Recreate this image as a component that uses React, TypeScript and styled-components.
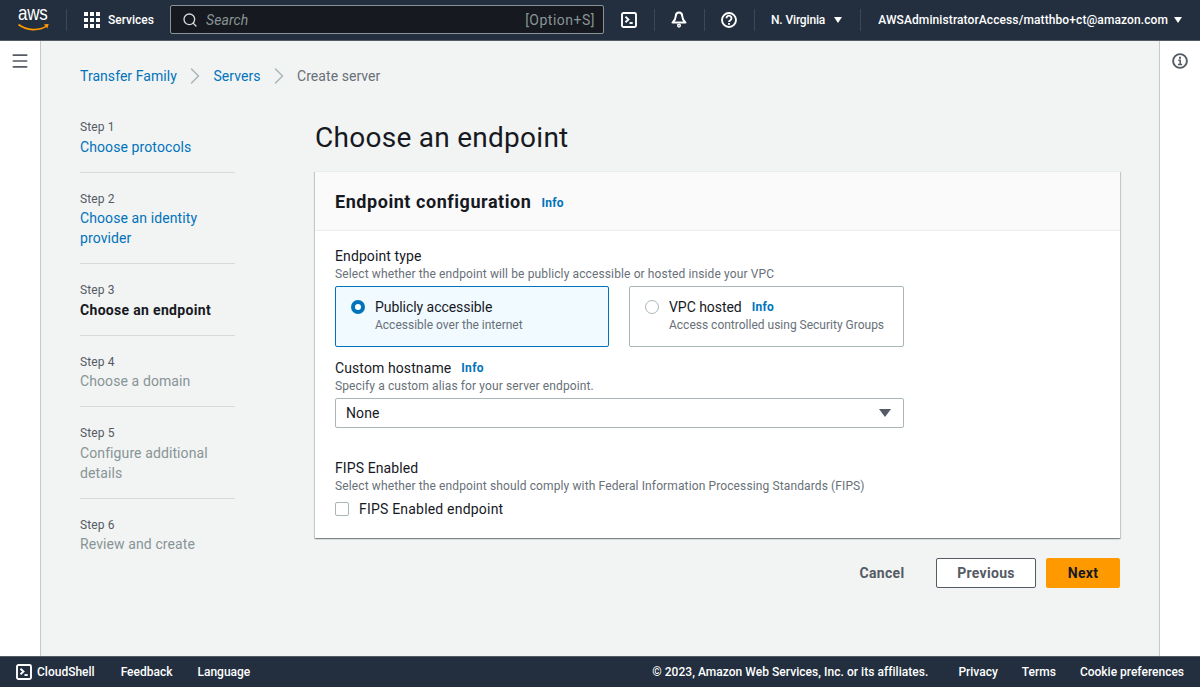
import styled, { createGlobalStyle } from "styled-components";
import { ChevronRight, Menu, Search } from "lucide-react";

const GlobalStyle = createGlobalStyle`
  html, body {
    margin: 0;
    padding: 0;
    background: #f2f3f3;
  }
  * {
    box-sizing: border-box;
  }
  body {
    font-family: Roboto, "Liberation Sans", sans-serif;
    font-size: 14px;
    line-height: 20px;
    letter-spacing: 0.1px;
    color: #16191f;
  }
`;

const Page = styled.div`
  display: grid;
  grid-template-rows: 41px 1fr 31px;
  width: 1200px;
  height: 687px;
  overflow: hidden;
`;

const TopBar = styled.header`
  display: flex;
  align-items: center;
  background: #232f3e;
  border-bottom: 1px solid #545b64;
  color: #fff;
  padding: 0 0 1px 18px;
`;

const Logo = styled.div`
  position: relative;
  width: 32px;
  height: 30px;
  font-family: "Liberation Sans", sans-serif;
  font-size: 17px;
  line-height: 20px;
  letter-spacing: -0.2px;
  color: #fff;

  svg {
    position: absolute;
    left: 0;
    top: 18px;
  }
`;

const LogoText = styled.span`
  display: block;
  transform: scale(1, 1.2);
  transform-origin: 0 15px;
`;

const BarDivider = styled.span<{ $gap: number }>`
  width: 1px;
  height: 22px;
  background: #414750;
  margin: 0 ${(p) => p.$gap}px;
`;

const ServicesButton = styled.div`
  display: flex;
  align-items: center;
  gap: 8px;
  font-size: 12px;
  font-weight: 500;
  letter-spacing: 0;
  width: 86px;
  margin-left: 1px;
`;

const SearchBox = styled.div`
  display: flex;
  align-items: center;
  width: 434px;
  height: 29px;
  background: #16191f;
  border: 1px solid #879596;
  border-radius: 2px;
  padding: 0 8px 0 11px;
  color: #d5dbdb;
  gap: 8px;
`;

const SearchHint = styled.span`
  flex: 1;
  font-style: italic;
  font-size: 14px;
  color: #879596;
`;

const ShortcutHint = styled.span`
  font-size: 14px;
  letter-spacing: 0.5px;
  color: #879596;
`;

const IconSlot = styled.div<{ $ml?: number }>`
  display: flex;
  align-items: center;
  justify-content: center;
  width: 20px;
  height: 20px;
  margin-left: ${(p) => p.$ml ?? 0}px;
`;

const BarLabel = styled.span<{ $ls?: number; $ml?: number }>`
  font-size: 12px;
  font-weight: 500;
  white-space: nowrap;
  margin-left: ${(p) => p.$ml ?? 0}px;
  letter-spacing: ${(p) => p.$ls ?? 0.1}px;
`;

const Caret = styled.span<{ $color?: string; $size?: number; $ml?: number }>`
  display: inline-block;
  width: 0;
  height: 0;
  margin-left: ${(p) => p.$ml ?? 0}px;
  border-left: ${(p) => p.$size ?? 5}px solid transparent;
  border-right: ${(p) => p.$size ?? 5}px solid transparent;
  border-top: ${(p) => (p.$size ?? 5) + 2}px solid ${(p) => p.$color ?? "#fff"};
`;

const Middle = styled.div`
  display: grid;
  grid-template-columns: 41px 1fr 41px;
  min-height: 0;
`;

const Rail = styled.aside<{ $side: "left" | "right" }>`
  background: #fff;
  display: flex;
  justify-content: center;
  padding-top: ${(p) => (p.$side === "left" ? 10 : 12)}px;
  border-${(p) => (p.$side === "left" ? "right" : "left")}: 1px solid #c6c9cc;
  color: #545b64;
`;

const Main = styled.main`
  padding: 25px 39px 0;
  background: #f2f3f3;
`;

const Breadcrumbs = styled.nav`
  display: flex;
  align-items: center;
  height: 20px;
  font-size: 14px;
  letter-spacing: 0.05px;
  color: #687078;
`;

const Crumb = styled.a`
  color: #0073bb;
`;

const CrumbSep = styled.span`
  display: flex;
  width: 36.6px;
  justify-content: center;
  color: #aab7b8;
`;

const Wizard = styled.div`
  display: grid;
  grid-template-columns: 155px 805px;
  column-gap: 80px;
  margin-top: 32px;
`;

const Steps = styled.ol`
  list-style: none;
  margin: 0;
  padding: 1px 0 0;
`;

const Step = styled.li`
  padding: 18px 0 15px;
  border-bottom: 1px solid #d5dbdb;

  &:first-child {
    padding-top: 0;
  }
  &:last-child {
    border-bottom: none;
  }
`;

const StepLabel = styled.div`
  font-size: 12px;
  line-height: 16px;
  color: #545b64;
  margin-bottom: 1.5px;
`;

const StepTitle = styled.div<{ $state: "link" | "current" | "disabled" }>`
  font-size: 14px;
  line-height: 20px;
  color: ${(p) =>
    p.$state === "link" ? "#0073bb" : p.$state === "current" ? "#16191f" : "#879596"};
  font-weight: ${(p) => (p.$state === "current" ? 700 : 400)};
  letter-spacing: ${(p) => (p.$state === "current" ? 0.32 : 0.1)}px;
`;

const Content = styled.section`
  display: flex;
  flex-direction: column;
`;

const PageTitle = styled.h1`
  margin: 2px 0 0;
  font-size: 28px;
  line-height: 36px;
  font-weight: 400;
  letter-spacing: 0.27px;
  color: #16191f;
`;

const Card = styled.div`
  margin-top: 15px;
  background: #fff;
  box-shadow: 0 1px 1px 0 rgba(0, 28, 36, 0.3), 1px 1px 1px 0 rgba(0, 28, 36, 0.15),
    -1px 1px 1px 0 rgba(0, 28, 36, 0.15);
  border-top: 1px solid #eaeded;
`;

const CardHeader = styled.div`
  display: flex;
  align-items: center;
  gap: 10px;
  height: 59px;
  padding: 0 20px;
  background: #fafafa;
  border-bottom: 1px solid #eaeded;

  a {
    margin-top: 4px;
  }
`;

const CardTitle = styled.h2`
  margin: 1px 0 0;
  font-size: 18px;
  line-height: 22px;
  font-weight: 700;
  letter-spacing: 0.55px;
`;

const InfoLink = styled.a`
  font-size: 12px;
  line-height: 16px;
  font-weight: 700;
  letter-spacing: 0.3px;
  color: #0073bb;
`;

const CardBody = styled.div`
  display: flex;
  flex-direction: column;
  padding: 15px 20px 19px;
`;

const Field = styled.div<{ $mt?: number }>`
  margin-top: ${(p) => p.$mt ?? 0}px;
  width: 569px;
`;

const WideField = styled(Field)`
  width: 100%;
`;

const FieldLabel = styled.div`
  display: flex;
  align-items: center;
  gap: 10px;
  font-size: 14px;
  line-height: 20px;
`;

const FieldHint = styled.div<{ $ls?: number }>`
  font-size: 12px;
  line-height: 16px;
  letter-spacing: ${(p) => p.$ls ?? 0.12}px;
  color: #687078;
`;

const RadioGrid = styled.div`
  display: grid;
  grid-template-columns: 274px 275px;
  column-gap: 20px;
  margin-top: 4px;
`;

const RadioCard = styled.div<{ $selected?: boolean }>`
  display: flex;
  gap: 10px;
  height: 61px;
  padding: 10px 15px;
  border: 1px solid ${(p) => (p.$selected ? "#0073bb" : "#aab7b8")};
  border-radius: 2px;
  background: ${(p) => (p.$selected ? "#f1faff" : "#fff")};
`;

const RadioDot = styled.span<{ $selected?: boolean }>`
  flex: none;
  width: 14px;
  height: 14px;
  margin-top: 3px;
  border-radius: 50%;
  background: #fff;
  border: ${(p) => (p.$selected ? "4px solid #0073bb" : "1px solid #aab7b8")};
`;

const RadioTitle = styled.div`
  display: flex;
  align-items: center;
  gap: 10px;
  font-size: 14px;
  line-height: 20px;
  letter-spacing: -0.05px;
`;

const SelectBox = styled.div`
  display: flex;
  align-items: center;
  justify-content: space-between;
  height: 30px;
  margin-top: 4px;
  padding: 0 12px 0 10px;
  background: #fff;
  border: 1px solid #aab7b8;
  border-radius: 2px;
`;

const CheckRow = styled.div`
  display: flex;
  align-items: center;
  gap: 10px;
  margin-top: 5px;
  letter-spacing: 0.2px;
`;

const CheckBox = styled.span`
  width: 14px;
  height: 14px;
  background: #fff;
  border: 1px solid #aab7b8;
  border-radius: 2px;
`;

const Actions = styled.div`
  display: flex;
  align-items: center;
  justify-content: flex-end;
  margin-top: 20px;
`;

const Button = styled.button<{ $variant: "link" | "normal" | "primary" }>`
  height: 30px;
  font: 700 14px/20px Roboto, "Liberation Sans", sans-serif;
  letter-spacing: 0.3px;
  border-radius: 2px;
  margin-left: ${(p) => (p.$variant === "primary" ? 10 : 0)}px;
  width: ${(p) => (p.$variant === "link" ? 64 : p.$variant === "normal" ? 100 : 74)}px;
  background: ${(p) =>
    p.$variant === "link" ? "transparent" : p.$variant === "normal" ? "#fff" : "#ff9900"};
  color: ${(p) => (p.$variant === "primary" ? "#16191f" : "#545b64")};
  border: 1px solid
    ${(p) =>
      p.$variant === "link" ? "transparent" : p.$variant === "normal" ? "#545b64" : "#ff9900"};
  margin-right: ${(p) => (p.$variant === "link" ? 22 : 0)}px;
  padding: 0;
`;

const Footer = styled.footer`
  display: flex;
  align-items: center;
  background: #232f3e;
  border-top: 1px solid #545b64;
  color: #fff;
  font-size: 12px;
  font-weight: 500;
  letter-spacing: 0;
  padding: 0 16px;
`;

const FooterItem = styled.span<{ $ml: number }>`
  margin-left: ${(p) => p.$ml}px;
  white-space: nowrap;
`;

const Copyright = styled.span`
  margin-left: auto;
  white-space: nowrap;
  letter-spacing: 0.04px;
`;

const ShellIcon = ({ size = 16 }: { size?: number }) => (
  <svg width={size} height={size} viewBox="0 0 16 16" fill="none" stroke="currentColor" strokeWidth="1.9">
    <rect x="1" y="1" width="14" height="14" rx="1.5" />
    <path d="M4.5 4.7 7.5 7.5l-3 2.8" />
    <path d="M8.5 11h3.2" />
  </svg>
);

const GridIcon = () => (
  <svg width="16" height="16" viewBox="0 0 16 16" fill="#fff">
    {[0, 6, 12].map((y) =>
      [0, 6, 12].map((x) => <rect key={`${x}-${y}`} x={x} y={y} width="4" height="4" />),
    )}
  </svg>
);

const BellIcon = () => (
  <svg width="16" height="17" viewBox="0 0 16 17" fill="none" stroke="#fff" strokeWidth="2">
    <path d="M8 1.5c2.2 0 3.2 1.6 3.2 3.5 0 2.6 1 4.2 3.3 6.6h-13C3.8 9.2 4.8 7.6 4.8 5c0-1.9 1-3.5 3.2-3.500z" strokeLinejoin="round" />
    <circle cx="8" cy="14.6" r="1.3" strokeWidth="1.5" />
  </svg>
);

const HelpIcon = () => (
  <svg width="16" height="16" viewBox="0 0 16 16" fill="none" stroke="#fff" strokeWidth="1.9">
    <circle cx="8" cy="8" r="7" />
    <path d="M5.5 6.2a2.5 2.5 0 1 1 3.8 2.1c-.9.5-1.3 1-1.3 1.8" />
    <path d="M8 11v1.8" />
  </svg>
);

const InfoIcon = () => (
  <svg width="16" height="16" viewBox="0 0 16 16" fill="none" stroke="#545b64" strokeWidth="1.9">
    <circle cx="8" cy="8" r="6.9" />
    <path d="M6.3 7.3H8.2v4M6 11.4h4.2" strokeWidth="1.5" />
    <path d="M8 3.8v1.9" strokeWidth="2" />
  </svg>
);

const steps = [
  { label: "Step 1", title: "Choose protocols", state: "link" },
  { label: "Step 2", title: "Choose an identity provider", state: "link" },
  { label: "Step 3", title: "Choose an endpoint", state: "current" },
  { label: "Step 4", title: "Choose a domain", state: "disabled" },
  { label: "Step 5", title: "Configure additional details", state: "disabled" },
  { label: "Step 6", title: "Review and create", state: "disabled" },
] as const;

export default function App() {
  return (
    <>
      <GlobalStyle />
      <Page>
        <TopBar>
          <Logo>
            <LogoText>aws</LogoText>
            <svg width="32" height="10" viewBox="0 0 32 10" fill="none">
              <path d="M0.5 1.5C9 8 21 8 28.5 3.2" stroke="#ff9900" strokeWidth="1.6" />
              <path d="M26 1.3 30.7 1 29.3 5.500z" fill="#ff9900" />
            </svg>
          </Logo>
          <BarDivider $gap={16} />
          <ServicesButton>
            <GridIcon />
            Services
          </ServicesButton>
          <SearchBox>
            <Search size={16} strokeWidth={2} />
            <SearchHint>Search</SearchHint>
            <ShortcutHint>[Option+S]</ShortcutHint>
          </SearchBox>
          <IconSlot $ml={15}>
            <ShellIcon />
          </IconSlot>
          <BarDivider $gap={14.5} />
          <IconSlot>
            <BellIcon />
          </IconSlot>
          <BarDivider $gap={14.5} />
          <IconSlot>
            <HelpIcon />
          </IconSlot>
          <BarDivider $gap={15} />
          <BarLabel $ls={-0.15} $ml={1}>
            N. Virginia
          </BarLabel>
          <Caret $ml={9} $size={4} />
          <BarDivider $gap={17.5} />
          <BarLabel>AWSAdministratorAccess/matthbo+ct@amazon.com</BarLabel>
          <Caret $ml={6} $size={4} />
        </TopBar>

        <Middle>
          <Rail $side="left">
            <Menu size={20} strokeWidth={2} />
          </Rail>
          <Main>
            <Breadcrumbs>
              <Crumb>Transfer Family</Crumb>
              <CrumbSep>
                <ChevronRight size={28} strokeWidth={1.3} />
              </CrumbSep>
              <Crumb>Servers</Crumb>
              <CrumbSep>
                <ChevronRight size={28} strokeWidth={1.3} />
              </CrumbSep>
              <span>Create server</span>
            </Breadcrumbs>
            <Wizard>
              <Steps>
                {steps.map((s) => (
                  <Step key={s.label}>
                    <StepLabel>{s.label}</StepLabel>
                    <StepTitle $state={s.state}>{s.title}</StepTitle>
                  </Step>
                ))}
              </Steps>
              <Content>
                <PageTitle>Choose an endpoint</PageTitle>
                <Card>
                  <CardHeader>
                    <CardTitle>Endpoint configuration</CardTitle>
                    <InfoLink>Info</InfoLink>
                  </CardHeader>
                  <CardBody>
                    <Field>
                      <FieldLabel>Endpoint type</FieldLabel>
                      <FieldHint>Select whether the endpoint will be publicly accessible or hosted inside your VPC</FieldHint>
                      <RadioGrid>
                        <RadioCard $selected>
                          <RadioDot $selected />
                          <div>
                            <RadioTitle>Publicly accessible</RadioTitle>
                            <FieldHint $ls={0}>Accessible over the internet</FieldHint>
                          </div>
                        </RadioCard>
                        <RadioCard>
                          <RadioDot />
                          <div>
                            <RadioTitle>
                              VPC hosted <InfoLink>Info</InfoLink>
                            </RadioTitle>
                            <FieldHint $ls={0}>Access controlled using Security Groups</FieldHint>
                          </div>
                        </RadioCard>
                      </RadioGrid>
                    </Field>
                    <Field $mt={11}>
                      <FieldLabel>
                        Custom hostname <InfoLink>Info</InfoLink>
                      </FieldLabel>
                      <FieldHint>Specify a custom alias for your server endpoint.</FieldHint>
                      <SelectBox>
                        None
                        <Caret $color="#545b64" $size={6} />
                      </SelectBox>
                    </Field>
                    <WideField $mt={30}>
                      <FieldLabel>FIPS Enabled</FieldLabel>
                      <FieldHint>
                        Select whether the endpoint should comply with Federal Information Processing Standards (FIPS)
                      </FieldHint>
                      <CheckRow>
                        <CheckBox />
                        FIPS Enabled endpoint
                      </CheckRow>
                    </WideField>
                  </CardBody>
                </Card>
                <Actions>
                  <Button $variant="link">Cancel</Button>
                  <Button $variant="normal">Previous</Button>
                  <Button $variant="primary">Next</Button>
                </Actions>
              </Content>
            </Wizard>
          </Main>
          <Rail $side="right">
            <InfoIcon />
          </Rail>
        </Middle>

        <Footer>
          <ShellIcon />
          <FooterItem $ml={5}>CloudShell</FooterItem>
          <FooterItem $ml={26}>Feedback</FooterItem>
          <FooterItem $ml={25}>Language</FooterItem>
          <Copyright>© 2023, Amazon Web Services, Inc. or its affiliates.</Copyright>
          <FooterItem $ml={30}>Privacy</FooterItem>
          <FooterItem $ml={24}>Terms</FooterItem>
          <FooterItem $ml={24}>Cookie preferences</FooterItem>
        </Footer>
      </Page>
    </>
  );
}
